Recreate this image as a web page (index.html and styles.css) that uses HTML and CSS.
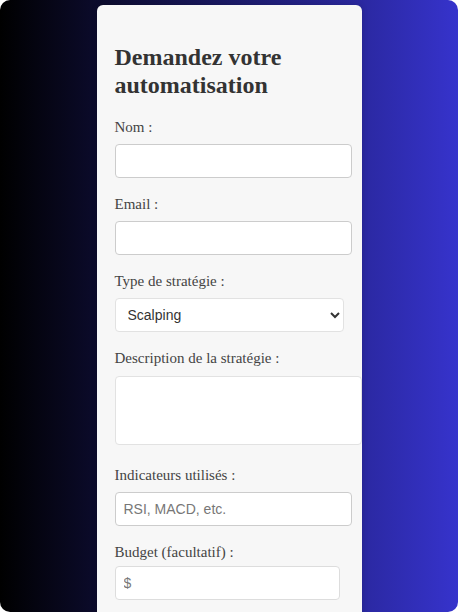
FILE: index.html
```html
<!DOCTYPE html>
<html lang="fr">
<head>
<meta charset="utf-8">
<title>Demandez votre automatisation</title>
<link rel="stylesheet" href="styles.css">
</head>
<body>
<div class="page">
  <form class="card">
    <h2 class="title">Demandez votre automatisation</h2>

    <label class="field-label" for="nom">Nom :</label>
    <input class="text-input" id="nom" type="text">

    <label class="field-label" for="email">Email :</label>
    <input class="text-input" id="email" type="email">

    <label class="field-label" for="type">Type de stratégie :</label>
    <select class="select-input" id="type">
      <option>Scalping</option>
      <option>Swing trading</option>
      <option>Day trading</option>
    </select>

    <label class="field-label" for="desc">Description de la stratégie :</label>
    <textarea class="area-input" id="desc"></textarea>

    <label class="field-label" for="ind">Indicateurs utilisés :</label>
    <input class="text-input" id="ind" type="text" placeholder="RSI, MACD, etc.">

    <label class="field-label field-label--tight" for="budget">Budget (facultatif) :</label>
    <input class="text-input text-input--short" id="budget" type="text" placeholder="$">
  </form>
</div>
</body>
</html>
```
FILE: styles.css
```css
html, body {
  margin: 0;
  padding: 0;
  background: #ffffff;
}

.page {
  height: 612px;
  border-radius: 10px;
  background: linear-gradient(90deg, #000000 0%, #3633cc 100%);
  overflow: hidden;
  display: flex;
  justify-content: center;
  align-items: flex-start;
  padding-top: 5px;
  box-sizing: border-box;
}

.card {
  width: 229px;
  padding: 18px 18px 40px;
  background: #f7f7f7;
  border-radius: 6px;
  box-shadow: 0 0 6px rgba(0, 0, 0, 0.15);
  display: flex;
  flex-direction: column;
  align-items: flex-start;
  flex-shrink: 0;
}

.title {
  margin: 21px 0 20px;
  font-family: "Liberation Serif", "Times New Roman", serif;
  font-size: 24px;
  font-weight: bold;
  line-height: 27.6px;
  color: #333333;
}

.field-label {
  font-family: "Liberation Serif", "Times New Roman", serif;
  font-size: 15px;
  line-height: 17px;
  color: #444444;
  margin-bottom: 8px;
}

.field-label--tight {
  margin-bottom: 5px;
}

.text-input,
.area-input,
.select-input {
  font-family: "Liberation Sans", Arial, sans-serif;
  font-size: 14px;
  color: #333333;
  background: #ffffff;
  border-radius: 4px;
  outline: none;
  margin: 0 0 18px;
}

.text-input {
  width: 219px;
  height: 16px;
  line-height: 16px;
  padding: 8px;
  border: 1px solid #cccccc;
  box-sizing: content-box;
}

.text-input::placeholder {
  color: #777777;
}

.text-input--short {
  width: 207px;
  border-color: #dddddd;
}

.select-input {
  width: 229px;
  height: 34px;
  box-sizing: border-box;
  padding: 0 8px;
  border: 1px solid #e2e2e2;
}

.area-input {
  width: 229px;
  height: 51px;
  padding: 8px;
  border: 1px solid #e2e2e2;
  box-sizing: content-box;
  resize: none;
  display: block;
  margin-top: 1px;
  margin-bottom: 22px;
}
```
